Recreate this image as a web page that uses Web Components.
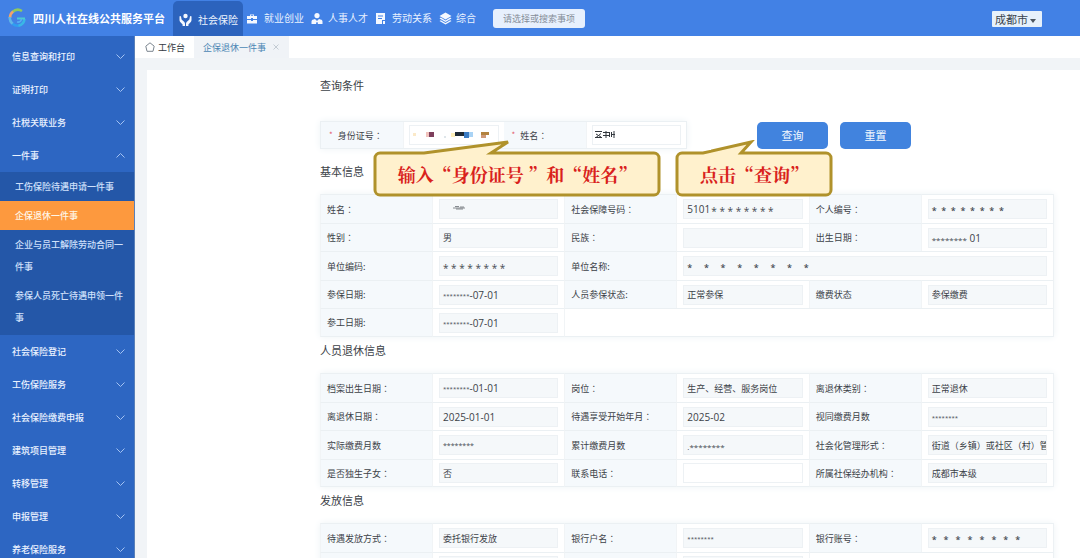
<!DOCTYPE html>
<html lang="zh-CN">
<head>
<meta charset="utf-8">
<title>四川人社在线公共服务平台</title>
<style>
html, body { margin: 0; height: 100%; }
body { font: 9px/1 "Noto Sans CJK SC", sans-serif; color: #3c4248; background: #fff; overflow: hidden; }
</style>
</head>
<body>
<portal-app></portal-app>
<script>
const define = (name, html, setup) => {
  const tpl = document.createElement('template');
  tpl.innerHTML = html;
  customElements.define(name, class extends HTMLElement {
    constructor() {
      super();
      this.attachShadow({ mode: 'open' }).append(tpl.content.cloneNode(true));
    }
    connectedCallback() {
      if (setup && !this.ready) { this.ready = true; setup(this, this.shadowRoot); }
    }
  });
};

const ICONS = {
  care: '<circle cx="6.500" cy="3" r="2.200"/><path d="M.5 3.500c0-.8 1.300-.8 1.500 0l.6 3 2.500 2.200c.7.600.9 1.200.9 2V13H3.600v-1.600L1 8.700C.6 8.200.5 7.500.5 7zM12.500 3.500c0-.8-1.300-.8-1.500 0l-.6 3-2.500 2.200c-.7.600-.9 1.200-.9 2V13h2.400v-1.600L12 8.700c.4-.5.5-1.200.5-1.700z"/>',
  bag: '<path d="M3 3V1.500h4V3h3v3H6V5H4v1H0V3zM3.800 3h2.400v-.7H3.800zM0 7h4v1h2V7h4v3.500H0z" transform="translate(0 1)"/>',
  person: '<circle cx="6" cy="3.600" r="2.600"/><path d="M.5 12V9.500c0-1.600 1.500-2 3.500-2.500l2 2 2-2c2 .5 3.500.9 3.500 2.500V12H7l-.6-2h-.8L5 12z"/>',
  doc: '<path fill-rule="evenodd" d="M1 1h9v7H7v4H1zM3 3.500v1h5v-1zM3 6v1h4V6zM8 9h2v3H8z"/>',
  layers: '<path d="M6.500.5 12.500 4l-6 3.500L.5 4zM1.800 5.600 6.500 8.400l4.700-2.800 1.300.8-6 3.500-6-3.500zM1.800 8.200 6.500 11l4.700-2.800 1.300.8-6 3.500-6-3.500z"/>'
};

define('nav-item', `
<style>
:host { display: flex; }
a { display: flex; align-items: center; gap: 4px; padding: 0 3px 0 4px; color: #e9f2ff; font-size: 10px; text-decoration: none; white-space: nowrap; }
svg { width: 13px; height: 13px; fill: #f4f8ff; }
:host([active]) a { gap: 6px; padding: 2px 5px 0 6px; margin-top: 1px; background: #2c63bd; border-radius: 5px 5px 0 0; color: #eef5ff; }
</style>
<a href="#"><svg viewBox="0 0 13 13" aria-hidden="true"></svg><slot></slot></a>`,
(el, root) => { root.querySelector('svg').innerHTML = ICONS[el.getAttribute('icon')]; });

define('top-bar', `
<style>
:host { display: flex; height: 36px; background: #4281e5; }
.brand { display: flex; align-items: center; gap: 7px; padding: 0 8px 0 8px; }
.brand svg { width: 18px; height: 20px; }
h1 { margin: 0; font-size: 11px; font-weight: 700; color: #fff; white-space: nowrap; }
nav { display: flex; }
input { align-self: center; box-sizing: border-box; width: 92px; height: 19px; margin-left: 14px; padding: 0 10px; border: 0; border-radius: 3px; background: #e7f0fd; font: inherit; font-size: 9px; }
input::placeholder { color: #858d98; opacity: 1; }
.city { position: relative; align-self: center; margin: 2px 38px 0 auto; }
select { appearance: none; box-sizing: border-box; display: block; width: 50px; height: 16px; padding: 0 0 0 3px; border: 0; border-radius: 1px; background: #e6f1fb; color: #39434d; font: inherit; font-size: 11px; line-height: 16px; }
.city svg { position: absolute; right: 6px; top: 8px; width: 6px; height: 4px; fill: #4c5660; pointer-events: none; }
</style>
<div class="brand">
  <svg viewBox="0 0 18 20" fill="none" stroke-width="2.600" aria-hidden="true">
    <path d="M14 3A8 8 0 0 0 4.500 4" stroke="#8fc95f"/>
    <path d="M5 3.600A8 8 0 0 0 2 10" stroke="#f0a46a"/>
    <path d="M1.800 9A8 8 0 0 0 5 16" stroke="#5fb6e8"/>
    <path d="M4.500 15.700A8 8 0 0 0 11 17.700" stroke="#2f9df0"/>
    <path d="M10.500 17.800A8 8 0 0 0 16.500 11" stroke="#39b6e6"/>
    <path d="M9 10.500h8" stroke="#4ccbd0" stroke-width="2"/>
    <path d="M9 14c2 .4 4-.8 4.500-3" stroke="#57aef5" stroke-width="1.500"/>
  </svg>
  <h1>四川人社在线公共服务平台</h1>
</div>
<nav>
  <nav-item icon="care" active>社会保险</nav-item>
  <nav-item icon="bag">就业创业</nav-item>
  <nav-item icon="person">人事人才</nav-item>
  <nav-item icon="doc">劳动关系</nav-item>
  <nav-item icon="layers">综合</nav-item>
</nav>
<input type="text" placeholder="请选择或搜索事项" aria-label="搜索事项">
<div class="city"><select aria-label="城市"><option>成都市</option></select><svg viewBox="0 0 6 4" aria-hidden="true"><path d="M0 0h6L3 4z"/></svg></div>`);

define('side-group', `
<style>
:host { display: block; }
button { display: flex; align-items: center; justify-content: space-between; width: 100%; height: 33px; padding: 0 9px 0 12px; border: 0; background: none; color: #eaf2ff; font: inherit; font-size: 9px; font-weight: 500; }
svg { width: 9px; height: 5px; fill: none; stroke: #a3c2f2; }
:host([open]) svg { transform: rotate(180deg); }
div { display: none; background: #2457a8; padding-bottom: 3px; }
:host([open]) div { display: block; }
</style>
<button type="button"><span></span><svg viewBox="0 0 9 5" aria-hidden="true"><path d="M.5.5l4 4 4-4"/></svg></button>
<div><slot></slot></div>`,
(el, root) => {
  root.querySelector('span').textContent = el.getAttribute('label');
  root.querySelector('button').setAttribute('aria-expanded', el.hasAttribute('open'));
});

define('side-link', `
<style>
:host { display: block; }
a { display: block; padding: 4px 7px 3px 15px; color: #cfe0fb; font-size: 9px; font-weight: 500; line-height: 22px; text-decoration: none; }
:host([active]) a { background: #fd993e; color: #fff6e6; }
</style>
<a href="#"><slot></slot></a>`);

define('side-menu', `
<style>
:host { display: block; box-sizing: border-box; width: 135px; padding-top: 4px; background: #2d66c2; border-right: 1px solid #5a80b8; overflow: hidden; }
</style>
<nav>
<side-group label="信息查询和打印"></side-group>
<side-group label="证明打印"></side-group>
<side-group label="社税关联业务"></side-group>
<side-group label="一件事" open>
  <side-link>工伤保险待遇申请一件事</side-link>
  <side-link active>企保退休一件事</side-link>
  <side-link>企业与员工解除劳动合同一件事</side-link>
  <side-link>参保人员死亡待遇申领一件事</side-link>
</side-group>
<side-group label="社会保险登记"></side-group>
<side-group label="工伤保险服务"></side-group>
<side-group label="社会保险缴费申报"></side-group>
<side-group label="建筑项目管理"></side-group>
<side-group label="转移管理"></side-group>
<side-group label="申报管理"></side-group>
<side-group label="养老保险服务"></side-group>
</nav>`);

define('tab-strip', `
<style>
:host { display: flex; height: 22px; background: #fff; }
a { display: flex; align-items: center; gap: 3px; padding: 0 9px 0 10px; font-size: 9px; color: #333a42; text-decoration: none; }
a.on { gap: 7px; padding: 0 10px 0 9px; background: #f0f3f7; color: #4c86b4; }
svg { width: 10px; height: 10px; fill: none; stroke: #7b858f; }
.on svg { width: 6px; height: 6px; stroke: #c3cbd3; }
</style>
<a href="#"><svg viewBox="0 0 10 10" aria-hidden="true"><path d="M.8 4.200 5 .8l4.200 3.400L8 9.300H2z"/></svg>工作台</a>
<a href="#" class="on">企保退休一件事<svg viewBox="0 0 6 6" aria-hidden="true"><path d="M.5.5l5 5M5.500.5l-5 5"/></svg></a>`);

/* Read-only or editable value box; "mask" is hidden data shown before the value. */
define('value-box', `
<style>
:host { display: flex; box-sizing: border-box; height: 20px; padding-left: 3px; border: 1px solid #edf1f4; background: #f5f8fa; overflow: hidden; }
:host([editable]) { background: #fff; }
.mask { flex: none; padding-top: 2px; font: 10px/18px "Open Sans", sans-serif; white-space: pre; color: #454b52; }
.mask:empty { display: none; }
.mask.s6 { font-size: 6px; padding-top: 1px; }
.mask.s7 { font-size: 7px; padding-top: 1px; }
.mask.s8 { font-size: 8px; }
.mask.s9 { font-size: 9px; font-weight: 600; }
input { flex: 1; min-width: 0; width: 0; padding: 0; border: 0; outline: 0; background: none; color: #3c4248; font: inherit; font-size: 9px; height: 18px; }
input.num { font: 10px "Open Sans", sans-serif; }
input.lead { flex: none; width: 24px; order: -1; }
slot { display: flex; align-items: center; }
</style>
<slot></slot><span class="mask"></span><input>`,
(el, root) => {
  const input = root.querySelector('input'), mask = root.querySelector('.mask');
  const value = el.getAttribute('value') || '';
  input.value = value;
  input.readOnly = !el.hasAttribute('editable');
  input.setAttribute('aria-label', el.getAttribute('label'));
  if (/\d/.test(value)) input.className = 'num';
  if (el.hasAttribute('lead')) input.classList.add('lead');
  mask.textContent = el.getAttribute('mask') || '';
  mask.classList.add('s' + (el.getAttribute('size') || 10));
});

const stars = gap => Array(8).fill('*').join(' '.repeat(gap));
const S8 = stars(0), SP = stars(1);
const smudge = '<svg width="26" height="8" viewBox="0 0 26 8"><path d="M10 3h12M12 1.500h4M17 2h4M13 4h7" stroke="#6a6f75" stroke-width=".8"/></svg>';
const TABLES = {
  basic: [
    [['姓名：', { art: smudge }], ['社会保障号码：', { value: '5101', mask: SP, lead: 1 }], ['个人编号：', { mask: stars(2), size: 9 }]],
    [['性别：', { value: '男' }], ['民族：', {}], ['出生日期：', { mask: S8, size: 8, value: ' 01' }]],
    [['单位编码:', { mask: SP }], ['单位名称:', { mask: stars(5), size: 9, span: 3 }]],
    [['参保日期:', { mask: S8, size: 6, value: '-07-01' }], ['人员参保状态:', { value: '正常参保' }], ['缴费状态', { value: '参保缴费' }]],
    [['参工日期:', { mask: S8, size: 6, value: '-07-01' }], null]
  ],
  retire: [
    [['档案出生日期：', { mask: S8, size: 6, value: '-01-01' }], ['岗位：', { value: '生产、经营、服务岗位' }], ['离退休类别：', { value: '正常退休' }]],
    [['离退休日期：', { value: '2025-01-01' }], ['待遇享受开始年月：', { value: '2025-02' }], ['视同缴费月数', { mask: S8, size: 6 }]],
    [['实际缴费月数', { mask: S8, size: 7 }], ['累计缴费月数', { mask: '.' + S8, size: 8 }], ['社会化管理形式：', { value: '街道（乡镇）或社区（村）管理' }]],
    [['是否独生子女：', { value: '否' }], ['联系电话：', { editable: 1 }], ['所属社保经办机构：', { value: '成都市本级' }]]
  ],
  pay: [
    [['待遇发放方式：', { value: '委托银行发放' }], ['银行户名：', { mask: S8, size: 6 }], ['银行账号：', { mask: stars(3), size: 9 }]],
    [['', {}], ['', {}], null]
  ]
};

define('info-table', `
<style>
:host { display: block; }
table { width: 100%; table-layout: fixed; border-collapse: separate; border-spacing: 0; border-right: 1px solid #edf1f4; box-shadow: 0 0 7px #edf3f6; background: #fff; }
col.l { width: 112px; }
tr { height: 28px; }
tr:nth-child(odd) { height: 29px; }
th, td { box-sizing: border-box; padding: 0; border-top: 1px solid #ebf0f3; border-left: 1px solid #f1f4f6; text-align: left; vertical-align: middle; }
tr:last-child > * { border-bottom: 1px solid #ebf0f3; }
th { padding-left: 6px; background: #f5f9fc; font-size: 9px; font-weight: 400; color: #3c4248; }
td { padding: 0 6px; }
.colon { font-family: "Noto Sans CJK TC", sans-serif; }
</style>
<table><colgroup><col class="l"><col><col class="l"><col><col class="l"><col></colgroup><tbody></tbody></table>`,
(el, root) => {
  const body = root.querySelector('tbody');
  for (const row of TABLES[el.getAttribute('data')]) {
    const tr = body.insertRow();
    let used = 0;
    for (const cell of row) {
      if (!cell) { tr.insertCell().colSpan = 6 - used; continue; }
      const [label, opt] = cell;
      const th = document.createElement('th');
      th.scope = 'row';
      th.innerHTML = label.replace('：', '<span class="colon" lang="zh-TW">：</span>');
      tr.append(th);
      const td = tr.insertCell();
      if (opt.span) td.colSpan = opt.span;
      used += 1 + (opt.span || 1);
      const box = document.createElement('value-box');
      box.setAttribute('label', label || '其他');
      for (const k of ['value', 'mask', 'size', 'lead', 'editable']) if (k in opt) box.setAttribute(k, opt[k]);
      if (opt.art) box.innerHTML = opt.art;
      td.append(box);
    }
  }
});

define('call-out', `
<style>
:host { position: absolute; z-index: 2; display: block; }
svg { display: block; fill: #fff1cd; stroke: #b0922b; stroke-width: 3; stroke-linejoin: miter; }
p { position: absolute; inset: 11px 0 0; display: flex; align-items: center; justify-content: center; margin: 0; font: 700 18px/1 "Noto Serif CJK SC", "Noto Sans CJK SC", serif; color: #d9221c; white-space: pre; }
</style>
<svg aria-hidden="true"><path/></svg><p><slot></slot></p>`,
(el, root) => {
  const w = +el.getAttribute('width'), [a, b, tip] = el.getAttribute('tail').split(' ');
  const svg = root.querySelector('svg');
  svg.setAttribute('width', w);
  svg.setAttribute('height', 57);
  root.querySelector('path').setAttribute('d',
    `M7 13H${a}L${tip} 2L${b} 13H${w - 7}a5 5 0 0 1 5 5V50a5 5 0 0 1-5 5H7a5 5 0 0 1-5-5V18a5 5 0 0 1 5-5z`);
});

define('query-bar', `
<style>
:host { position: relative; display: flex; align-items: center; padding-bottom: 9px; margin-top: 23px; }
.fields { flex: none; box-sizing: border-box; display: grid; grid-template-columns: 83px 1fr 83px 1fr; width: 50%; height: 28px; border: 1px solid #ebf0f3; box-shadow: 0 0 7px #edf3f6; }
.fields > * { display: flex; align-items: center; }
label { gap: 5px; padding-left: 8px; background: #f5f9fc; border-right: 1px solid #f1f4f6; font-size: 9px; }
label i { color: #e2566b; font-style: normal; font-size: 8px; }
label .colon { margin-left: -5px; font-family: "Noto Sans CJK TC", sans-serif; }
.cell { padding: 0 5px; }
.cell span { position: relative; display: block; width: 100%; }
input { box-sizing: border-box; width: 100%; height: 20px; border: 1px solid #edf1f4; padding: 0 4px; background: #fff; font: inherit; display: block; }
.cell svg { position: absolute; left: 0; top: 5px; pointer-events: none; }
.actions { display: flex; gap: 12px; margin-left: 70px; }
button { width: 71px; height: 27px; border: 0; border-radius: 5px; padding: 0; background: #4183de; color: #f4f9ff; font: inherit; font-size: 11px; }
.one { left: 53px; top: 19px; }
.two { left: 355px; top: 19px; }
</style>
<div class="fields">
  <label for="idno"><i>*</i>身份证号<span class="colon" lang="zh-TW">：</span></label>
  <div class="cell"><span><input id="idno"><svg width="84" height="10" viewBox="0 0 84 10" shape-rendering="crispEdges" aria-hidden="true">
    <path d="M4 3h3v3H4z" fill="#fbe9c8"/><path d="M17 2h4v5h-4z" fill="#f1c3bd"/><path d="M20 2h5v5h-5z" fill="#7e3f5c"/>
    <path d="M35 6h2v2h-2z" fill="#dfe6ea"/><path d="M42 3h4v4h-4z" fill="#fff0bb"/><path d="M46 2h10v4H46z" fill="#1f2a35"/>
    <path d="M55 2h5v6h-5z" fill="#3b7cc4"/><path d="M60 2h4v5h-4z" fill="#a9d3f5"/><path d="M72 2h8v3h-8z" fill="#b3833f"/><path d="M72 5h5v3h-5z" fill="#cf9a79"/>
  </svg></span></div>
  <label for="name"><i>*</i>姓名<span class="colon" lang="zh-TW">：</span></label>
  <div class="cell"><span><input id="name"><svg width="40" height="10" viewBox="0 0 40 10" fill="none" stroke="#33383e" aria-hidden="true">
    <path d="M3 1.500h7M4 4l5 3M9 3.500 4 7.500M3 7.500h7M11 2.500h6M11 5.500h6M14 1v7M17.500 2v5M19 4.500h4M19.500 2v5M22 1v7"/>
  </svg></span></div>
</div>
<div class="actions"><button type="button">查询</button><button type="button">重置</button></div>
<call-out class="one" width="288" tail="51 118 135">输入“身份证号 ”和“姓名”</call-out>
<call-out class="two" width="158" tail="28 66 76">点击“查询”</call-out>`);

define('info-section', `
<style>
:host { display: block; }
h2 { margin: 0 0 10px; font-size: 11px; font-weight: 400; line-height: 26px; color: #3c4248; }
</style>
<section><h2></h2><slot></slot></section>`,
(el, root) => { root.querySelector('h2').textContent = el.getAttribute('heading'); });

define('portal-app', `
<style>
:host { display: flex; flex-direction: column; height: 100vh; overflow: hidden; }
top-bar { flex: none; }
.body { flex: 1; min-height: 0; display: flex; }
side-menu { flex: none; }
.page { flex: 1; min-width: 0; display: flex; flex-direction: column; background: #f1f4f7; overflow: hidden; }
tab-strip { flex: none; }
main { flex: 1; min-height: 0; margin: 12px 0 0 12px; padding: 2px 26px 0 173px; background: #fff; overflow: hidden; }
</style>
<top-bar></top-bar>
<div class="body">
  <side-menu></side-menu>
  <div class="page">
    <tab-strip></tab-strip>
    <main>
      <info-section heading="查询条件"><query-bar></query-bar></info-section>
      <info-section heading="基本信息"><info-table data="basic"></info-table></info-section>
      <info-section heading="人员退休信息"><info-table data="retire"></info-table></info-section>
      <info-section heading="发放信息"><info-table data="pay"></info-table></info-section>
    </main>
  </div>
</div>`);
</script>
</body>
</html>
